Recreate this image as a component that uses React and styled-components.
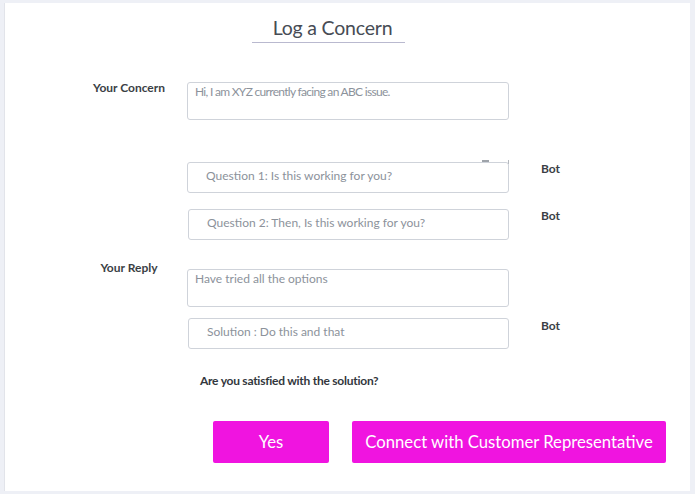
import React from "react";
import styled, { createGlobalStyle } from "styled-components";

const Global = createGlobalStyle`
  html, body { margin: 0; padding: 0; background: #eef0f6; }
  body { font-family: Lato, "Open Sans", sans-serif; }
  * { box-sizing: border-box; }
`;

const Page = styled.div`
  width: 695px;
  height: 494px;
  padding: 3px 5px 3px 4px;
  background: #eef0f6;
`;

const Card = styled.div`
  height: 488px;
  background: #ffffff;
  border-left: 1px solid #e2e4ea;
  display: flex;
  flex-direction: column;
`;

const TitleWrap = styled.div`
  margin: 13px 0 0 247px;
  width: 153px;
  padding: 0 0 2px 8px;
  border-bottom: 1px solid #b9b9cf;
  text-align: center;
`;

const Title = styled.h1`
  margin: 0;
  font-size: 19.5px;
  line-height: 24px;
  font-weight: 400;
  letter-spacing: -0.2px;
  color: #474c55;
`;

const Row = styled.div`
  display: grid;
  grid-template-columns: 110px 322px 32px auto;
  margin-top: ${(p) => p.$top}px;
  padding-left: 72px;
  align-items: start;
`;

const Label = styled.div`
  font-size: 12px;
  line-height: 16px;
  font-weight: 700;
  color: #3b3f45;
  text-align: center;
  margin-top: ${(p) => p.$offset || 0}px;
  margin-right: 6px;
`;

const FieldCell = styled.div`
  grid-column: 2;
  position: relative;
  padding-left: ${(p) => p.$shift || 0}px;
`;

const TextArea = styled.div`
  height: 38px;
  border: 1px solid #cfd3da;
  border-radius: 3px;
  padding: 1px 7px;
  font-size: 12px;
  line-height: 16px;
  letter-spacing: ${(p) => p.$tight || 0}px;
  color: #8c929b;
`;

const BotBox = styled.div`
  height: 31px;
  border: 1px solid #cfd3da;
  border-radius: 3px;
  padding: 0 18px 4px;
  display: flex;
  align-items: center;
  font-size: 12px;
  color: #8c929b;
`;

const Mark = styled.span`
  position: absolute;
  top: -2px;
  right: 20px;
  width: 7px;
  height: 2px;
  background: #9ea3aa;
`;

const Tick = styled.span`
  position: absolute;
  top: -2px;
  right: 0;
  width: 1px;
  height: 4px;
  background: #b5b9bf;
`;

const Side = styled.div`
  grid-column: 4;
  font-size: 12px;
  line-height: 16px;
  font-weight: 700;
  color: #3b3f45;
  margin-top: ${(p) => p.$offset || 0}px;
`;

const Question = styled.div`
  margin: 24px 0 0 195px;
  font-size: 12px;
  line-height: 16px;
  font-weight: 700;
  letter-spacing: -0.25px;
  color: #33373d;
`;

const Buttons = styled.div`
  display: flex;
  gap: 23px;
  margin: 32px 0 0 208px;
`;

const Button = styled.button`
  width: ${(p) => p.$w}px;
  height: 42px;
  border: none;
  border-radius: 2px;
  background: #f014e0;
  color: #ffffff;
  font-family: Lato, "Open Sans", sans-serif;
  font-size: 16.7px;
  font-weight: 400;
  padding: 0;
  cursor: pointer;
`;

export default function App() {
  return (
    <>
      <Global />
      <Page>
        <Card>
          <TitleWrap>
            <Title>Log a Concern</Title>
          </TitleWrap>

          <Row $top={39}>
            <Label $offset={-2}>Your Concern</Label>
            <FieldCell>
              <TextArea $tight={-0.7}>Hi, I am XYZ currently facing an ABC issue.</TextArea>
            </FieldCell>
          </Row>

          <Row $top={42}>
            <FieldCell>
              <BotBox>Question 1: Is this working for you?</BotBox>
              <Mark />
              <Tick />
            </FieldCell>
            <Side $offset={-1}>Bot</Side>
          </Row>

          <Row $top={16}>
            <FieldCell $shift={1}>
              <BotBox>Question 2: Then, Is this working for you?</BotBox>
            </FieldCell>
            <Side $offset={-1}>Bot</Side>
          </Row>

          <Row $top={29}>
            <Label $offset={-9}>Your Reply</Label>
            <FieldCell>
              <TextArea>Have tried all the options</TextArea>
            </FieldCell>
          </Row>

          <Row $top={11}>
            <FieldCell $shift={1}>
              <BotBox>Solution : Do this and that</BotBox>
            </FieldCell>
            <Side>Bot</Side>
          </Row>

          <Question>Are you satisfied with the solution?</Question>

          <Buttons>
            <Button $w={116}>Yes</Button>
            <Button $w={314}>Connect with Customer Representative</Button>
          </Buttons>
        </Card>
      </Page>
    </>
  );
}
